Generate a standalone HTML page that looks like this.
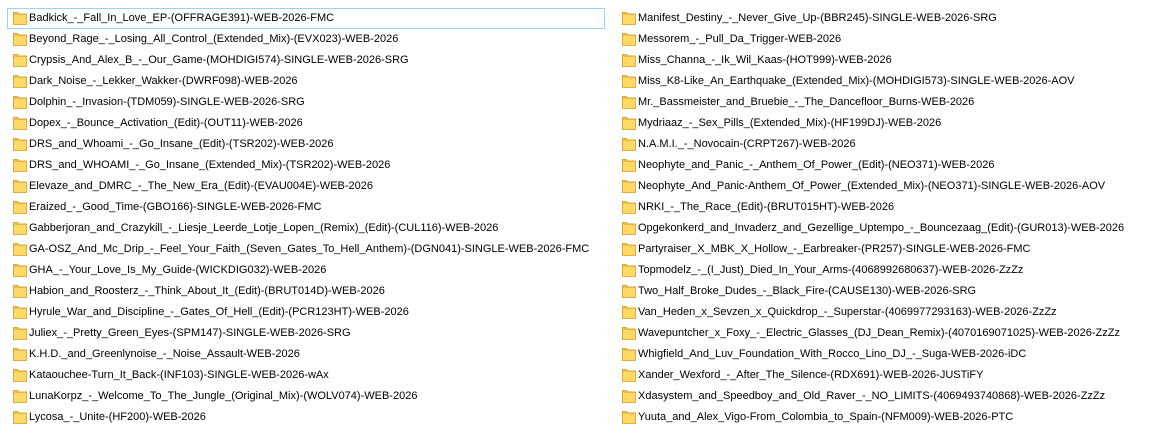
<!DOCTYPE html>
<html><head><style>
body{margin:0;width:1173px;height:443px;background:#fff;overflow:hidden;font-family:"Liberation Sans",sans-serif;font-size:11px;color:#000}
.col{position:absolute;top:8px}
.r{height:21px;position:relative;white-space:nowrap}
.r span{position:absolute;left:22px;top:3px;line-height:15px;letter-spacing:0px}
.f{position:absolute;left:6px;top:4px;width:14px;height:13px}
.sel{outline:1px solid #99d1ff;outline-offset:-1px}
</style></head><body>
<svg width="0" height="0" style="position:absolute"><defs><symbol id="fd" viewBox="0 0 14 13"><path d="M0.5 0.5h4l1.5 1.5h7.5v10.5h-13z" fill="#e8c056" stroke="#d9a93a" stroke-width="1"/><rect x="1" y="3" width="12" height="9" fill="#ffd966"/><path d="M1 12.5h12.5V3" fill="none" stroke="#e0b040"/></symbol></defs></svg>
<div class="col" style="left:7px;width:598px">
<div class="r sel"><svg class="f"><use href="#fd"/></svg><span>Badkick_-_Fall_In_Love_EP-(OFFRAGE391)-WEB-2026-FMC</span></div>
<div class="r"><svg class="f"><use href="#fd"/></svg><span>Beyond_Rage_-_Losing_All_Control_(Extended_Mix)-(EVX023)-WEB-2026</span></div>
<div class="r"><svg class="f"><use href="#fd"/></svg><span>Crypsis_And_Alex_B_-_Our_Game-(MOHDIGI574)-SINGLE-WEB-2026-SRG</span></div>
<div class="r"><svg class="f"><use href="#fd"/></svg><span>Dark_Noise_-_Lekker_Wakker-(DWRF098)-WEB-2026</span></div>
<div class="r"><svg class="f"><use href="#fd"/></svg><span>Dolphin_-_Invasion-(TDM059)-SINGLE-WEB-2026-SRG</span></div>
<div class="r"><svg class="f"><use href="#fd"/></svg><span>Dopex_-_Bounce_Activation_(Edit)-(OUT11)-WEB-2026</span></div>
<div class="r"><svg class="f"><use href="#fd"/></svg><span>DRS_and_Whoami_-_Go_Insane_(Edit)-(TSR202)-WEB-2026</span></div>
<div class="r"><svg class="f"><use href="#fd"/></svg><span>DRS_and_WHOAMI_-_Go_Insane_(Extended_Mix)-(TSR202)-WEB-2026</span></div>
<div class="r"><svg class="f"><use href="#fd"/></svg><span>Elevaze_and_DMRC_-_The_New_Era_(Edit)-(EVAU004E)-WEB-2026</span></div>
<div class="r"><svg class="f"><use href="#fd"/></svg><span>Eraized_-_Good_Time-(GBO166)-SINGLE-WEB-2026-FMC</span></div>
<div class="r"><svg class="f"><use href="#fd"/></svg><span>Gabberjoran_and_Crazykill_-_Liesje_Leerde_Lotje_Lopen_(Remix)_(Edit)-(CUL116)-WEB-2026</span></div>
<div class="r"><svg class="f"><use href="#fd"/></svg><span>GA-OSZ_And_Mc_Drip_-_Feel_Your_Faith_(Seven_Gates_To_Hell_Anthem)-(DGN041)-SINGLE-WEB-2026-FMC</span></div>
<div class="r"><svg class="f"><use href="#fd"/></svg><span>GHA_-_Your_Love_Is_My_Guide-(WICKDIG032)-WEB-2026</span></div>
<div class="r"><svg class="f"><use href="#fd"/></svg><span>Habion_and_Roosterz_-_Think_About_It_(Edit)-(BRUT014D)-WEB-2026</span></div>
<div class="r"><svg class="f"><use href="#fd"/></svg><span>Hyrule_War_and_Discipline_-_Gates_Of_Hell_(Edit)-(PCR123HT)-WEB-2026</span></div>
<div class="r"><svg class="f"><use href="#fd"/></svg><span>Juliex_-_Pretty_Green_Eyes-(SPM147)-SINGLE-WEB-2026-SRG</span></div>
<div class="r"><svg class="f"><use href="#fd"/></svg><span>K.H.D._and_Greenlynoise_-_Noise_Assault-WEB-2026</span></div>
<div class="r"><svg class="f"><use href="#fd"/></svg><span>Kataouchee-Turn_It_Back-(INF103)-SINGLE-WEB-2026-wAx</span></div>
<div class="r"><svg class="f"><use href="#fd"/></svg><span>LunaKorpz_-_Welcome_To_The_Jungle_(Original_Mix)-(WOLV074)-WEB-2026</span></div>
<div class="r"><svg class="f"><use href="#fd"/></svg><span>Lycosa_-_Unite-(HF200)-WEB-2026</span></div>
</div>
<div class="col" style="left:616px;width:550px">
<div class="r"><svg class="f"><use href="#fd"/></svg><span>Manifest_Destiny_-_Never_Give_Up-(BBR245)-SINGLE-WEB-2026-SRG</span></div>
<div class="r"><svg class="f"><use href="#fd"/></svg><span>Messorem_-_Pull_Da_Trigger-WEB-2026</span></div>
<div class="r"><svg class="f"><use href="#fd"/></svg><span>Miss_Channa_-_Ik_Wil_Kaas-(HOT999)-WEB-2026</span></div>
<div class="r"><svg class="f"><use href="#fd"/></svg><span>Miss_K8-Like_An_Earthquake_(Extended_Mix)-(MOHDIGI573)-SINGLE-WEB-2026-AOV</span></div>
<div class="r"><svg class="f"><use href="#fd"/></svg><span>Mr._Bassmeister_and_Bruebie_-_The_Dancefloor_Burns-WEB-2026</span></div>
<div class="r"><svg class="f"><use href="#fd"/></svg><span>Mydriaaz_-_Sex_Pills_(Extended_Mix)-(HF199DJ)-WEB-2026</span></div>
<div class="r"><svg class="f"><use href="#fd"/></svg><span>N.A.M.I._-_Novocain-(CRPT267)-WEB-2026</span></div>
<div class="r"><svg class="f"><use href="#fd"/></svg><span>Neophyte_and_Panic_-_Anthem_Of_Power_(Edit)-(NEO371)-WEB-2026</span></div>
<div class="r"><svg class="f"><use href="#fd"/></svg><span>Neophyte_And_Panic-Anthem_Of_Power_(Extended_Mix)-(NEO371)-SINGLE-WEB-2026-AOV</span></div>
<div class="r"><svg class="f"><use href="#fd"/></svg><span>NRKI_-_The_Race_(Edit)-(BRUT015HT)-WEB-2026</span></div>
<div class="r"><svg class="f"><use href="#fd"/></svg><span>Opgekonkerd_and_Invaderz_and_Gezellige_Uptempo_-_Bouncezaag_(Edit)-(GUR013)-WEB-2026</span></div>
<div class="r"><svg class="f"><use href="#fd"/></svg><span>Partyraiser_X_MBK_X_Hollow_-_Earbreaker-(PR257)-SINGLE-WEB-2026-FMC</span></div>
<div class="r"><svg class="f"><use href="#fd"/></svg><span>Topmodelz_-_(I_Just)_Died_In_Your_Arms-(4068992680637)-WEB-2026-ZzZz</span></div>
<div class="r"><svg class="f"><use href="#fd"/></svg><span>Two_Half_Broke_Dudes_-_Black_Fire-(CAUSE130)-WEB-2026-SRG</span></div>
<div class="r"><svg class="f"><use href="#fd"/></svg><span>Van_Heden_x_Sevzen_x_Quickdrop_-_Superstar-(4069977293163)-WEB-2026-ZzZz</span></div>
<div class="r"><svg class="f"><use href="#fd"/></svg><span>Wavepuntcher_x_Foxy_-_Electric_Glasses_(DJ_Dean_Remix)-(4070169071025)-WEB-2026-ZzZz</span></div>
<div class="r"><svg class="f"><use href="#fd"/></svg><span>Whigfield_And_Luv_Foundation_With_Rocco_Lino_DJ_-_Suga-WEB-2026-iDC</span></div>
<div class="r"><svg class="f"><use href="#fd"/></svg><span>Xander_Wexford_-_After_The_Silence-(RDX691)-WEB-2026-JUSTiFY</span></div>
<div class="r"><svg class="f"><use href="#fd"/></svg><span>Xdasystem_and_Speedboy_and_Old_Raver_-_NO_LIMITS-(4069493740868)-WEB-2026-ZzZz</span></div>
<div class="r"><svg class="f"><use href="#fd"/></svg><span>Yuuta_and_Alex_Vigo-From_Colombia_to_Spain-(NFM009)-WEB-2026-PTC</span></div>
</div>
</body></html>
